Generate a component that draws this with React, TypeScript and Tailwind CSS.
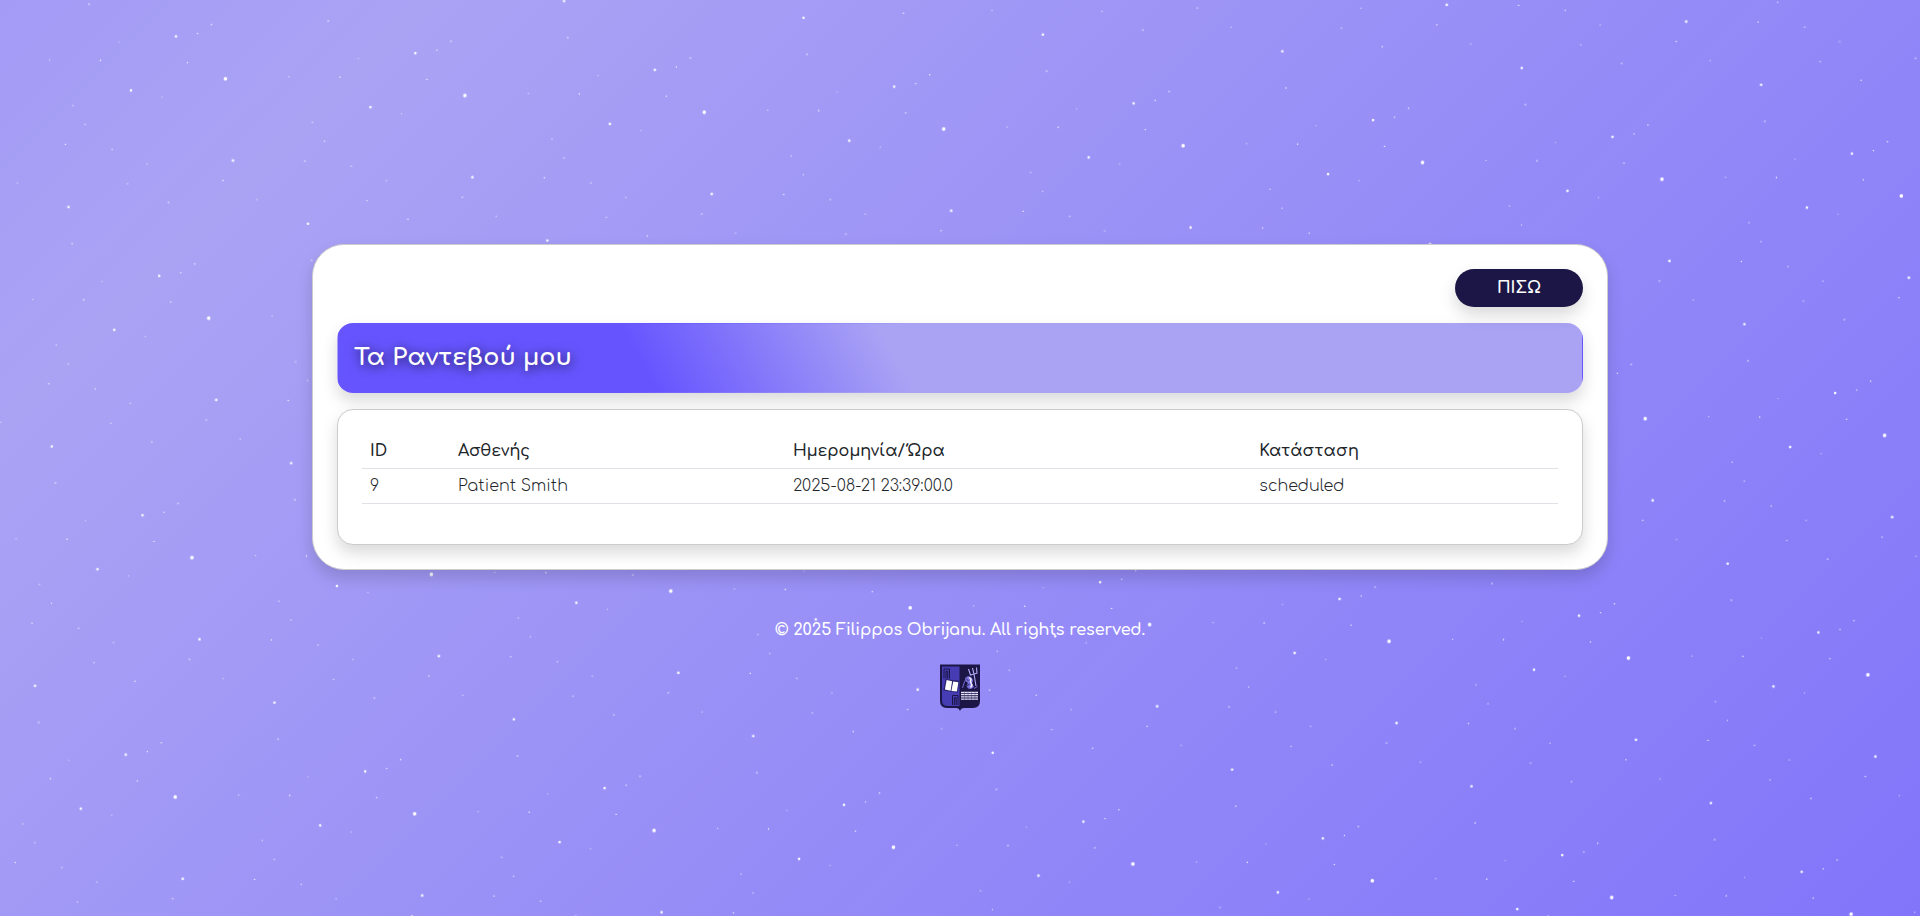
import React from "react";

type Star = { x: number; y: number; r: number; o: number };

const STARS: Star[] = [
  { x: 89, y: 238, r: 0.7, o: 1 },
  { x: 212.7, y: 9.7, r: 0.7, o: 0.9 },
  { x: 178.1, y: 24.1, r: 1.3, o: 0.95 },
  { x: 199.4, y: 19.6, r: 0.7, o: 1 },
  { x: 121.6, y: 33.6, r: 0.7, o: 0.5 },
  { x: 53.6, y: 56.4, r: 0.7, o: 0.6 },
  { x: 104.5, y: 53.3, r: 0.7, o: 1 },
  { x: 191.4, y: 49.4, r: 0.7, o: 0.9 },
  { x: 230.4, y: 62.9, r: 1.8, o: 1 },
  { x: 137, y: 81.1, r: 1.3, o: 0.95 },
  { x: 168.4, y: 85.5, r: 0.8, o: 0.45 },
  { x: 80.2, y: 100.3, r: 0.7, o: 0.7 },
  { x: 93.5, y: 118.3, r: 0.7, o: 0.7 },
  { x: 75.4, y: 139.4, r: 0.7, o: 0.9 },
  { x: 122.2, y: 141.3, r: 0.7, o: 0.8 },
  { x: 158.1, y: 153.3, r: 0.8, o: 0.55 },
  { x: 3.6, y: 143.9, r: 1.3, o: 0.95 },
  { x: 30.2, y: 181.3, r: 0.8, o: 0.5 },
  { x: 140.1, y: 174.5, r: 0.7, o: 0.7 },
  { x: 235, y: 164.5, r: 0.7, o: 0.9 },
  { x: 82.8, y: 201.7, r: 1.3, o: 0.95 },
  { x: 182.2, y: 190.2, r: 0.7, o: 0.9 },
];

const APPOINTMENTS = [
  { id: 9, patient: "Patient Smith", date: "2025-08-21 23:39:00.0", status: "scheduled" },
];

function StarField() {
  return (
    <svg className="pointer-events-none absolute inset-0 h-full w-full" aria-hidden="true">
      <defs>
        <pattern id="stars" width="240" height="240" patternUnits="userSpaceOnUse" patternTransform="rotate(4)">
          {STARS.map((s) => (
            <circle key={`${s.x}-${s.y}`} cx={s.x} cy={s.y} r={s.r} fill="#fff" fillOpacity={s.o} />
          ))}
        </pattern>
      </defs>
      <rect width="100%" height="100%" fill="url(#stars)" />
    </svg>
  );
}

function Crest() {
  return (
    <svg viewBox="0 0 40 50" className="mt-5 h-[50px] w-10" aria-hidden="true">
      <path d="M0 2.5H40V39Q40 46 33 46H24Q21 46 20 49Q19 46 16 46H7Q0 46 0 39Z" fill="#1b1645" />
      <path d="M2 4.5H19.5V44H8Q2 44 2 38.5Z" fill="#463cb4" />
      <path d="M4 16.5V7H9.5V16.5M6 16.5V9.2H7.7V16.5" fill="none" stroke="#1b1645" strokeWidth="1" />
      <path d="M12.5 43V33.5H18V43M14.4 43V35.7H16.2V43" fill="none" stroke="#1b1645" strokeWidth="1" />
      <path d="M5.5 17L19.3 18.8L17.6 30.8L3.3 28.6Z" fill="#2a2270" />
      <path d="M6.6 18L12.1 19.3L10.6 28.8L4.9 27.5Z" fill="#fff" />
      <path d="M13.2 19.6L18.4 20.2L16.9 29.6L11.4 28.9Z" fill="#fff" />
      <path
        d="M28.5 7L30.5 13L37 11.2L36.5 5.5M32.5 6L34 12L36 24"
        fill="none"
        stroke="#b3acf7"
        strokeWidth="1.1"
      />
      <path d="M25 16L28 14L31 15L33 18L32 22L34 25L31 27L28 26.5L26.5 24L28 21L25.5 19Z" fill="#7b71dc" />
      <path d="M29 15.5L31 17L30.5 20L32 23L30.5 25.5" fill="none" stroke="#f2f0ff" strokeWidth="1.5" />
      <path d="M26 16.5L28.5 19M27 24L29.5 22" fill="none" stroke="#1b1645" strokeWidth="0.8" />
      <path d="M22.5 26L24 21L26 17M34 26.5L37.5 24.5" fill="none" stroke="#7268d2" strokeWidth="1" />
      <path d="M21 30.5H38M21 32.7H38M21 34.9H38M21 37.1H38" stroke="#e6e4ff" strokeWidth="1.3" />
      <path d="M24.5 30V38M28 30V38M31.5 30V38M35 30V38" stroke="#1b1645" strokeWidth="0.3" />
    </svg>
  );
}

export default function App() {
  return (
    <div className="relative flex min-h-screen flex-col items-center justify-center bg-[linear-gradient(135deg,#a39bf6_0%,#aaa3f4_15%,#8275fa_100%)] px-3 pt-10 font-['Comfortaa','Inter',sans-serif] text-[#212529]">
      <StarField />

      <main className="relative w-full max-w-[1296px] rounded-[32px] border border-[#ccc] bg-white p-6 shadow-[0_8px_16px_rgba(0,0,0,0.15)]">
        <div className="flex justify-end">
          <button
            type="button"
            className="h-[38px] w-32 cursor-pointer rounded-full bg-[#1b1645] text-[16px] font-bold text-white shadow-[0_8px_16px_rgba(0,0,0,0.15)]"
          >
            ΠΙΣΩ
          </button>
        </div>

        <header className="mt-4 flex h-[70px] items-center rounded-2xl border border-transparent bg-[linear-gradient(60deg,#6655ff_25%,#aaa3f4_45%)] px-4 shadow-[0_8px_16px_rgba(0,0,0,0.15)]">
          <h1 className="text-[24px] leading-8 font-bold text-white [text-shadow:1px_2px_12px_rgba(0,0,0,0.8)]">
            Τα Ραντεβού μου
          </h1>
        </header>

        <section className="mt-4 rounded-2xl border border-[#ccc] bg-white p-6 shadow-[0_8px_16px_rgba(0,0,0,0.15)]">
          <table className="mb-4 w-full table-fixed border-separate border-spacing-0 text-left text-[16px] leading-6">
            <colgroup>
              <col className="w-[88px]" />
              <col className="w-[28%]" />
              <col className="w-[39%]" />
              <col />
            </colgroup>
            <thead>
              <tr>
                {["ID", "Ασθενής", "Ημερομηνία/Ώρα", "Κατάσταση"].map((label) => (
                  <th key={label} scope="col" className="border-b border-[#dee2e6] px-2 py-[5px] font-semibold">
                    {label}
                  </th>
                ))}
              </tr>
            </thead>
            <tbody>
              {APPOINTMENTS.map((a) => (
                <tr key={a.id} className="font-light">
                  <td className="border-b border-[#dee2e6] px-2 py-[5px]">{a.id}</td>
                  <td className="border-b border-[#dee2e6] px-2 py-[5px]">{a.patient}</td>
                  <td className="border-b border-[#dee2e6] px-2 py-[5px]">{a.date}</td>
                  <td className="border-b border-[#dee2e6] px-2 py-[5px]">{a.status}</td>
                </tr>
              ))}
            </tbody>
          </table>
        </section>
      </main>

      <footer className="relative mt-12 flex flex-col items-center">
        <p className="text-[16px] leading-6 font-semibold text-white">
          © 2025 Filippos Obrijanu. All rights reserved.
        </p>
        <Crest />
      </footer>
    </div>
  );
}
